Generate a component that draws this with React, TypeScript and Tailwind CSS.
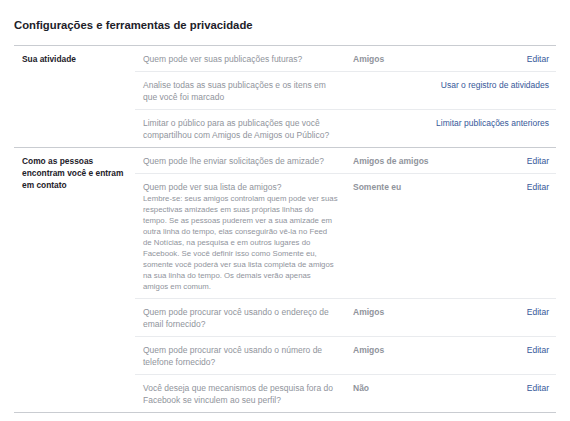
type Row = {
  q: string;
  note?: string;
  value?: string;
  link: string;
};

type Section = {
  label: string;
  rows: Row[];
};

const sections: Section[] = [
  {
    label: 'Sua atividade',
    rows: [
      { q: 'Quem pode ver suas publicações futuras?', value: 'Amigos', link: 'Editar' },
      { q: 'Analise todas as suas publicações e os itens em que você foi marcado', link: 'Usar o registro de atividades' },
      { q: 'Limitar o público para as publicações que você compartilhou com Amigos de Amigos ou Público?', link: 'Limitar publicações anteriores' },
    ],
  },
  {
    label: 'Como as pessoas encontram você e entram em contato',
    rows: [
      { q: 'Quem pode lhe enviar solicitações de amizade?', value: 'Amigos de amigos', link: 'Editar' },
      {
        q: 'Quem pode ver sua lista de amigos?',
        note: 'Lembre-se: seus amigos controlam quem pode ver suas respectivas amizades em suas próprias linhas do tempo. Se as pessoas puderem ver a sua amizade em outra linha do tempo, elas conseguirão vê-la no Feed de Notícias, na pesquisa e em outros lugares do Facebook. Se você definir isso como Somente eu, somente você poderá ver sua lista completa de amigos na sua linha do tempo. Os demais verão apenas amigos em comum.',
        value: 'Somente eu',
        link: 'Editar',
      },
      { q: 'Quem pode procurar você usando o endereço de email fornecido?', value: 'Amigos', link: 'Editar' },
      { q: 'Quem pode procurar você usando o número de telefone fornecido?', value: 'Amigos', link: 'Editar' },
      { q: 'Você deseja que mecanismos de pesquisa fora do Facebook se vinculem ao seu perfil?', value: 'Não', link: 'Editar' },
    ],
  },
];

const SettingRow = ({ row, first }: { row: Row; first: boolean }) => (
  <div
    className={`grid grid-cols-[195px_1fr_auto] gap-x-[15px] pl-2 pr-[7px] pt-[7px] pb-[6px] ${first ? '' : 'border-t border-[#e9ebee]'}`}
  >
    <div className="text-[#90949c]">
      <div className="text-[8.5px] leading-[12px]">{row.q}</div>
      {row.note && <div className="text-[7.8px] leading-[11px]">{row.note}</div>}
    </div>
    <div className="text-[8.5px] leading-[12px] font-bold text-[#90949c]">{row.value}</div>
    <a href="#" className="text-[8.5px] leading-[12px] text-[#365899] text-right">
      {row.link}
    </a>
  </div>
);

export default function App() {
  return (
    <div className="w-[570px] h-[421px] bg-white pt-[18px] px-[14px]" style={{ fontFamily: '"Liberation Sans", Arial, sans-serif' }}>
      <h1 className="text-[11.3px] leading-[14px] font-bold text-[#1d2129] mb-[13px]">
        Configurações e ferramentas de privacidade
      </h1>
      <div className="w-[542px] border-b border-[#c9ccd1]">
        {sections.map((s) => (
          <div key={s.label} className="flex border-t border-[#c9ccd1]">
            <div className="w-[121px] shrink-0 pl-2 pr-[8px] pt-[7px] text-[8.4px] leading-[12px] font-bold text-[#1d2129]">
              {s.label}
            </div>
            <div className="flex-1">
              {s.rows.map((r, i) => (
                <SettingRow key={r.q} row={r} first={i === 0} />
              ))}
            </div>
          </div>
        ))}
      </div>
    </div>
  );
}
